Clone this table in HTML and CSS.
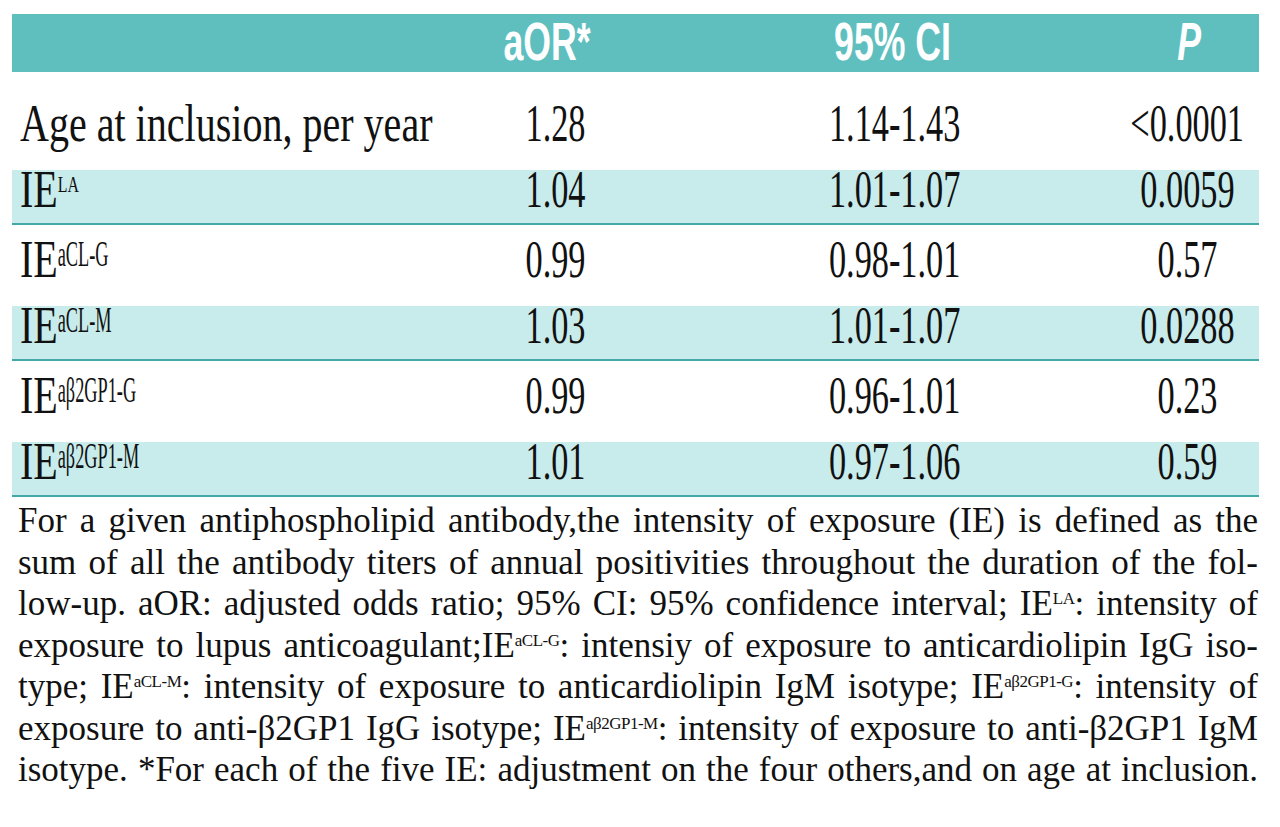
FILE: index.html
```html
<!DOCTYPE html>
<html lang="en">
<head>
<meta charset="utf-8">
<title>Table</title>
<link rel="stylesheet" href="styles.css">
</head>
<body>
<div class="page">
  <div class="table">
    <div class="row head">
      <div class="cell c-label"></div>
      <div class="cell c-num"><span class="hx">aOR*</span></div>
      <div class="cell c-ci"><span class="hx">95% CI</span></div>
      <div class="cell c-p"><span class="hx"><i>P</i></span></div>
    </div>
    <div class="row r-top">
      <div class="cell c-label"><span class="lbl">Age at inclusion, per year</span></div>
      <div class="cell c-num"><span class="num">1.28</span></div>
      <div class="cell c-ci"><span class="num">1.14-1.43</span></div>
      <div class="cell c-p"><span class="num">&lt;0.0001</span></div>
    </div>
    <div class="row r-band">
      <div class="cell c-label"><span class="lbl">IE<span class="sup sm">LA</span></span></div>
      <div class="cell c-num"><span class="num">1.04</span></div>
      <div class="cell c-ci"><span class="num">1.01-1.07</span></div>
      <div class="cell c-p"><span class="num">0.0059</span></div>
    </div>
    <div class="row r-plain">
      <div class="cell c-label"><span class="lbl">IE<span class="sup">aCL-G</span></span></div>
      <div class="cell c-num"><span class="num">0.99</span></div>
      <div class="cell c-ci"><span class="num">0.98-1.01</span></div>
      <div class="cell c-p"><span class="num">0.57</span></div>
    </div>
    <div class="row r-band">
      <div class="cell c-label"><span class="lbl">IE<span class="sup">aCL-M</span></span></div>
      <div class="cell c-num"><span class="num">1.03</span></div>
      <div class="cell c-ci"><span class="num">1.01-1.07</span></div>
      <div class="cell c-p"><span class="num">0.0288</span></div>
    </div>
    <div class="row r-plain">
      <div class="cell c-label"><span class="lbl">IE<span class="sup">aβ2GP1-G</span></span></div>
      <div class="cell c-num"><span class="num">0.99</span></div>
      <div class="cell c-ci"><span class="num">0.96-1.01</span></div>
      <div class="cell c-p"><span class="num">0.23</span></div>
    </div>
    <div class="row r-band">
      <div class="cell c-label"><span class="lbl">IE<span class="sup">aβ2GP1-M</span></span></div>
      <div class="cell c-num"><span class="num">1.01</span></div>
      <div class="cell c-ci"><span class="num">0.97-1.06</span></div>
      <div class="cell c-p"><span class="num">0.59</span></div>
    </div>
  </div>
  <div class="note">
    <span class="ln">For a given antiphospholipid antibody,the intensity of exposure (IE) is defined as the</span>
    <span class="ln">sum of all the antibody titers of annual positivities throughout the duration of the fol-</span>
    <span class="ln">low-up. aOR: adjusted odds ratio; 95% CI: 95% confidence interval; IE<span class="fs">LA</span>: intensity of</span>
    <span class="ln">exposure to lupus anticoagulant;IE<span class="fs">aCL-G</span>: intensiy of exposure to anticardiolipin IgG iso-</span>
    <span class="ln">type; IE<span class="fs">aCL-M</span>: intensity of exposure to anticardiolipin IgM isotype; IE<span class="fs">aβ2GP1-G</span>: intensity of</span>
    <span class="ln">exposure to anti-β2GP1 IgG isotype; IE<span class="fs">aβ2GP1-M</span>: intensity of exposure to anti-β2GP1 IgM</span>
    <span class="ln">isotype. *For each of the five IE: adjustment on the four others,and on age at inclusion.</span>
  </div>
</div>
</body>
</html>
```
FILE: styles.css
```css
html, body {
  margin: 0;
  background: #ffffff;
}
body {
  font-family: "Liberation Serif", "Times New Roman", serif;
  color: #111111;
}
.page {
  padding: 14px 21px 0 12px;
}
.row {
  display: grid;
  grid-template-columns: 420px 246px 434px 147px;
  box-sizing: border-box;
}
.cell {
  display: flex;
  justify-content: center;
  align-items: flex-start;
  white-space: nowrap;
  min-width: 0;
}
.c-label {
  justify-content: flex-start;
  padding-left: 8px;
}
.c-p {
  padding-left: 4px;
}
.head {
  background: #5fbfbf;
  height: 58px;
  color: #ffffff;
  font-family: "Liberation Sans", Arial, sans-serif;
  font-weight: 700;
  font-size: 54px;
  line-height: 54px;
}
.head .c-num {
  padding-right: 16px;
}
.head .c-ci {
  padding-right: 4px;
}
.head .c-p {
  padding-left: 8px;
}
.hx {
  display: inline-block;
  transform: scaleX(0.66);
}
.r-top,
.r-band,
.r-plain {
  font-size: 52px;
  line-height: 40px;
}
.r-top {
  height: 98px;
  padding-top: 32px;
}
.r-band {
  background: #c8ebeb;
  height: 55px;
  border-bottom: 2px solid #42a9a6;
}
.r-plain {
  height: 81px;
  padding-top: 15px;
}
.lbl {
  display: inline-block;
  flex: none;
  transform: scaleX(0.77);
  transform-origin: left center;
}
.num {
  display: inline-block;
  flex: none;
  transform: scaleX(0.66);
}
.sup {
  display: inline-block;
  font-size: 36px;
  line-height: 0;
  vertical-align: 10.6px;
  transform: scaleX(0.66);
  transform-origin: left center;
}
.sup.sm {
  font-size: 23px;
  vertical-align: 15px;
  transform: scaleX(0.9);
}
.note {
  margin-top: 3px;
  padding: 0 1px 0 6px;
  font-size: 35px;
  line-height: 41.5px;
}
.ln {
  display: block;
  text-align: justify;
  text-align-last: justify;
}
.fs {
  font-size: 17px;
  line-height: 0;
  vertical-align: 11px;
  letter-spacing: -0.5px;
}
```
